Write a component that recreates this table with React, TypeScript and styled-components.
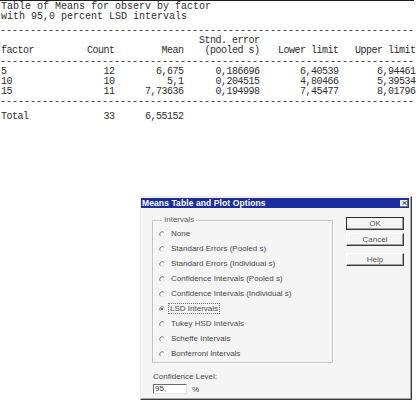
import React from "react";
import styled, { createGlobalStyle } from "styled-components";

const Global = createGlobalStyle`
  html, body { margin: 0; padding: 0; background: #ffffff; }
  body { width: 419px; height: 400px; overflow: hidden; }
`;

const Page = styled.div`
  display: flex;
  flex-direction: column;
  width: 419px;
  height: 400px;
`;

const Report = styled.div`
  width: 414px;
  border-top: 1px solid #1e1e1e;
  padding-top: 1px;
  font-family: "Liberation Mono", "Courier New", monospace;
  font-size: 10px;
  line-height: 10px;
  color: #2e2e2e;
  white-space: pre;
`;

const Line = styled.div<{ $gap?: number }>`
  height: 10px;
  margin-top: ${(p) => p.$gap ?? 0}px;
  padding-left: 1px;
`;

const Rule = styled.div<{ $gap?: number }>`
  height: 10px;
  margin-top: ${(p) => p.$gap ?? 0}px;
  overflow: hidden;
`;

const Row = styled.div<{ $gap?: number }>`
  display: grid;
  grid-template-columns: 60px 54px 69px 76px 79px 77px;
  height: 10px;
  margin-top: ${(p) => p.$gap ?? 0}px;
  letter-spacing: -0.5px;
`;

const Cell = styled.span<{ $left?: boolean }>`
  text-align: ${(p) => (p.$left ? "left" : "right")};
  padding-left: ${(p) => (p.$left ? 1 : 0)}px;
  margin-right: ${(p) => (p.$left ? 0 : -0.5)}px;
`;

const Dialog = styled.div`
  margin: 74px 0 0 140px;
  width: 272px;
  height: 205px;
  box-sizing: border-box;
  border-top: 1px solid #ececec;
  border-left: 1px solid #ececec;
  border-right: 1px solid #3a3a3a;
  border-bottom: 1px solid #3a3a3a;
  box-shadow: inset -1px -1px 0 #a8a8a8;
  background: #f5f5f5;
  padding: 1px 2px 0 0;
  display: flex;
  flex-direction: column;
  font-family: "Liberation Sans", Arial, sans-serif;
`;

const TitleBar = styled.div`
  display: flex;
  align-items: center;
  justify-content: space-between;
  height: 10px;
  background: #1d2c9e;
  padding: 0 1px 0 1px;
`;

const TitleText = styled.span`
  color: #ffffff;
  font-weight: bold;
  font-size: 8.5px;
  line-height: 10px;
  letter-spacing: 0.1px;
`;

const CloseBox = styled.span`
  display: flex;
  align-items: center;
  justify-content: center;
  width: 8px;
  height: 7px;
  background: #ececec;
  box-shadow: inset -1px -1px 0 #707070;
`;

const Body = styled.div`
  display: grid;
  grid-template-columns: 181px 58px;
  column-gap: 13px;
  padding: 8px 0 0 11px;
`;

const LeftCol = styled.div`
  display: flex;
  flex-direction: column;
`;

const Group = styled.fieldset`
  margin: 0;
  width: 181px;
  height: 147px;
  box-sizing: border-box;
  padding: 2px 0 0 6px;
  border: 1px solid #c4c4c4;
  box-shadow: 1px 1px 0 #ffffff, inset 1px 1px 0 #ffffff;
`;

const Legend = styled.legend`
  font-size: 8px;
  line-height: 8px;
  color: #5a5a5a;
  padding: 0 2px;
  margin-left: 3px;
`;

const RadioRow = styled.div`
  display: flex;
  align-items: center;
  height: 15px;
  gap: 4px;
  font-size: 8px;
  color: #4a4a4a;
`;

const RadioLabel = styled.span<{ $focus?: boolean }>`
  line-height: 9px;
  padding: 0 1px;
  outline: ${(p) => (p.$focus ? "1px dotted #707070" : "none")};
  margin-left: ${(p) => (p.$focus ? 0 : 1)}px;
`;

const LevelLabel = styled.div`
  margin-top: 9px;
  padding-left: 1px;
  font-size: 8px;
  line-height: 10px;
  color: #4a4a4a;
`;

const LevelRow = styled.div`
  display: flex;
  align-items: center;
  gap: 5px;
  margin-top: 2px;
  padding-left: 1px;
`;

const Edit = styled.div`
  width: 34px;
  height: 10px;
  box-sizing: border-box;
  background: #ffffff;
  border-top: 1px solid #6a6a6a;
  border-left: 1px solid #6a6a6a;
  border-right: 1px solid #e6e6e6;
  border-bottom: 1px solid #e6e6e6;
  font-size: 8px;
  line-height: 8px;
  color: #333;
  padding-left: 1px;
`;

const Percent = styled.span`
  font-size: 8px;
  color: #4a4a4a;
`;

const Buttons = styled.div`
  display: flex;
  flex-direction: column;
  padding-top: 1px;
`;

const Button = styled.div<{ $default?: boolean; $gap?: number }>`
  height: 13px;
  box-sizing: border-box;
  margin-top: ${(p) => p.$gap ?? 0}px;
  display: flex;
  align-items: center;
  justify-content: center;
  background: #f5f5f5;
  border: 1px solid ${(p) => (p.$default ? "#2a2a2a" : "transparent")};
  border-top-color: ${(p) => (p.$default ? "#2a2a2a" : "#ffffff")};
  border-left-color: ${(p) => (p.$default ? "#2a2a2a" : "#ffffff")};
  border-right-color: #3a3a3a;
  border-bottom-color: #3a3a3a;
  box-shadow: inset -1px -1px 0 #a0a0a0;
  font-size: 8px;
  color: #555;
`;

const Radio: React.FC<{ checked?: boolean }> = ({ checked }) => (
  <svg width="6" height="6" viewBox="0 0 12 12">
    <circle cx="6" cy="6" r="5" fill="#ffffff" stroke="#e2e2e2" strokeWidth="1.6" />
    <path d="M2.5 9.5 A5 5 0 0 1 9.5 2.5" fill="none" stroke="#6c6c6c" strokeWidth="1.8" />
    {checked && <circle cx="6" cy="6" r="2" fill="#333" />}
  </svg>
);

const dashes = "-".repeat(69);

const rows = [
  ["5", "12", "6,675", "0,186696", "6,40539", "6,94461"],
  ["10", "10", "5,1", "0,204515", "4,80466", "5,39534"],
  ["15", "11", "7,73636", "0,194998", "7,45477", "8,01796"],
];

const options = [
  "None",
  "Standard Errors (Pooled s)",
  "Standard Errors (Individual s)",
  "Confidence Intervals (Pooled s)",
  "Confidence Intervals (Individual s)",
  "LSD Intervals",
  "Tukey HSD Intervals",
  "Scheffe Intervals",
  "Bonferroni Intervals",
];

export default function App() {
  return (
    <>
      <Global />
      <Page>
        <Report>
          <Line>Table of Means for observ by factor</Line>
          <Line>with 95,0 percent LSD intervals</Line>
          <Rule $gap={4}>{dashes}</Rule>
          <Row>
            <Cell $left></Cell>
            <Cell></Cell>
            <Cell></Cell>
            <Cell>Stnd. error</Cell>
            <Cell></Cell>
            <Cell></Cell>
          </Row>
          <Row>
            <Cell $left>factor</Cell>
            <Cell>Count</Cell>
            <Cell>Mean</Cell>
            <Cell>(pooled s)</Cell>
            <Cell>Lower limit</Cell>
            <Cell>Upper limit</Cell>
          </Row>
          <Rule $gap={1}>{dashes}</Rule>
          {rows.map((r) => (
            <Row key={r[0]}>
              {r.map((v, i) => (
                <Cell key={i} $left={i === 0}>
                  {v}
                </Cell>
              ))}
            </Row>
          ))}
          <Rule>{dashes}</Rule>
          <Row $gap={5}>
            <Cell $left>Total</Cell>
            <Cell>33</Cell>
            <Cell>6,55152</Cell>
            <Cell></Cell>
            <Cell></Cell>
            <Cell></Cell>
          </Row>
        </Report>

        <Dialog>
          <TitleBar>
            <TitleText>Means Table and Plot Options</TitleText>
            <CloseBox>
              <svg width="5" height="4" viewBox="0 0 5 4">
                <path d="M0.5 0.2 L4.5 3.8 M4.5 0.2 L0.5 3.8" stroke="#222" strokeWidth="0.9" />
              </svg>
            </CloseBox>
          </TitleBar>
          <Body>
            <LeftCol>
              <Group>
                <Legend>Intervals</Legend>
                {options.map((o) => (
                  <RadioRow key={o}>
                    <Radio checked={o === "LSD Intervals"} />
                    <RadioLabel $focus={o === "LSD Intervals"}>{o}</RadioLabel>
                  </RadioRow>
                ))}
              </Group>
              <LevelLabel>Confidence Level:</LevelLabel>
              <LevelRow>
                <Edit>95,</Edit>
                <Percent>%</Percent>
              </LevelRow>
            </LeftCol>
            <Buttons>
              <Button $default>OK</Button>
              <Button $gap={3}>Cancel</Button>
              <Button $gap={7}>Help</Button>
            </Buttons>
          </Body>
        </Dialog>
      </Page>
    </>
  );
}
